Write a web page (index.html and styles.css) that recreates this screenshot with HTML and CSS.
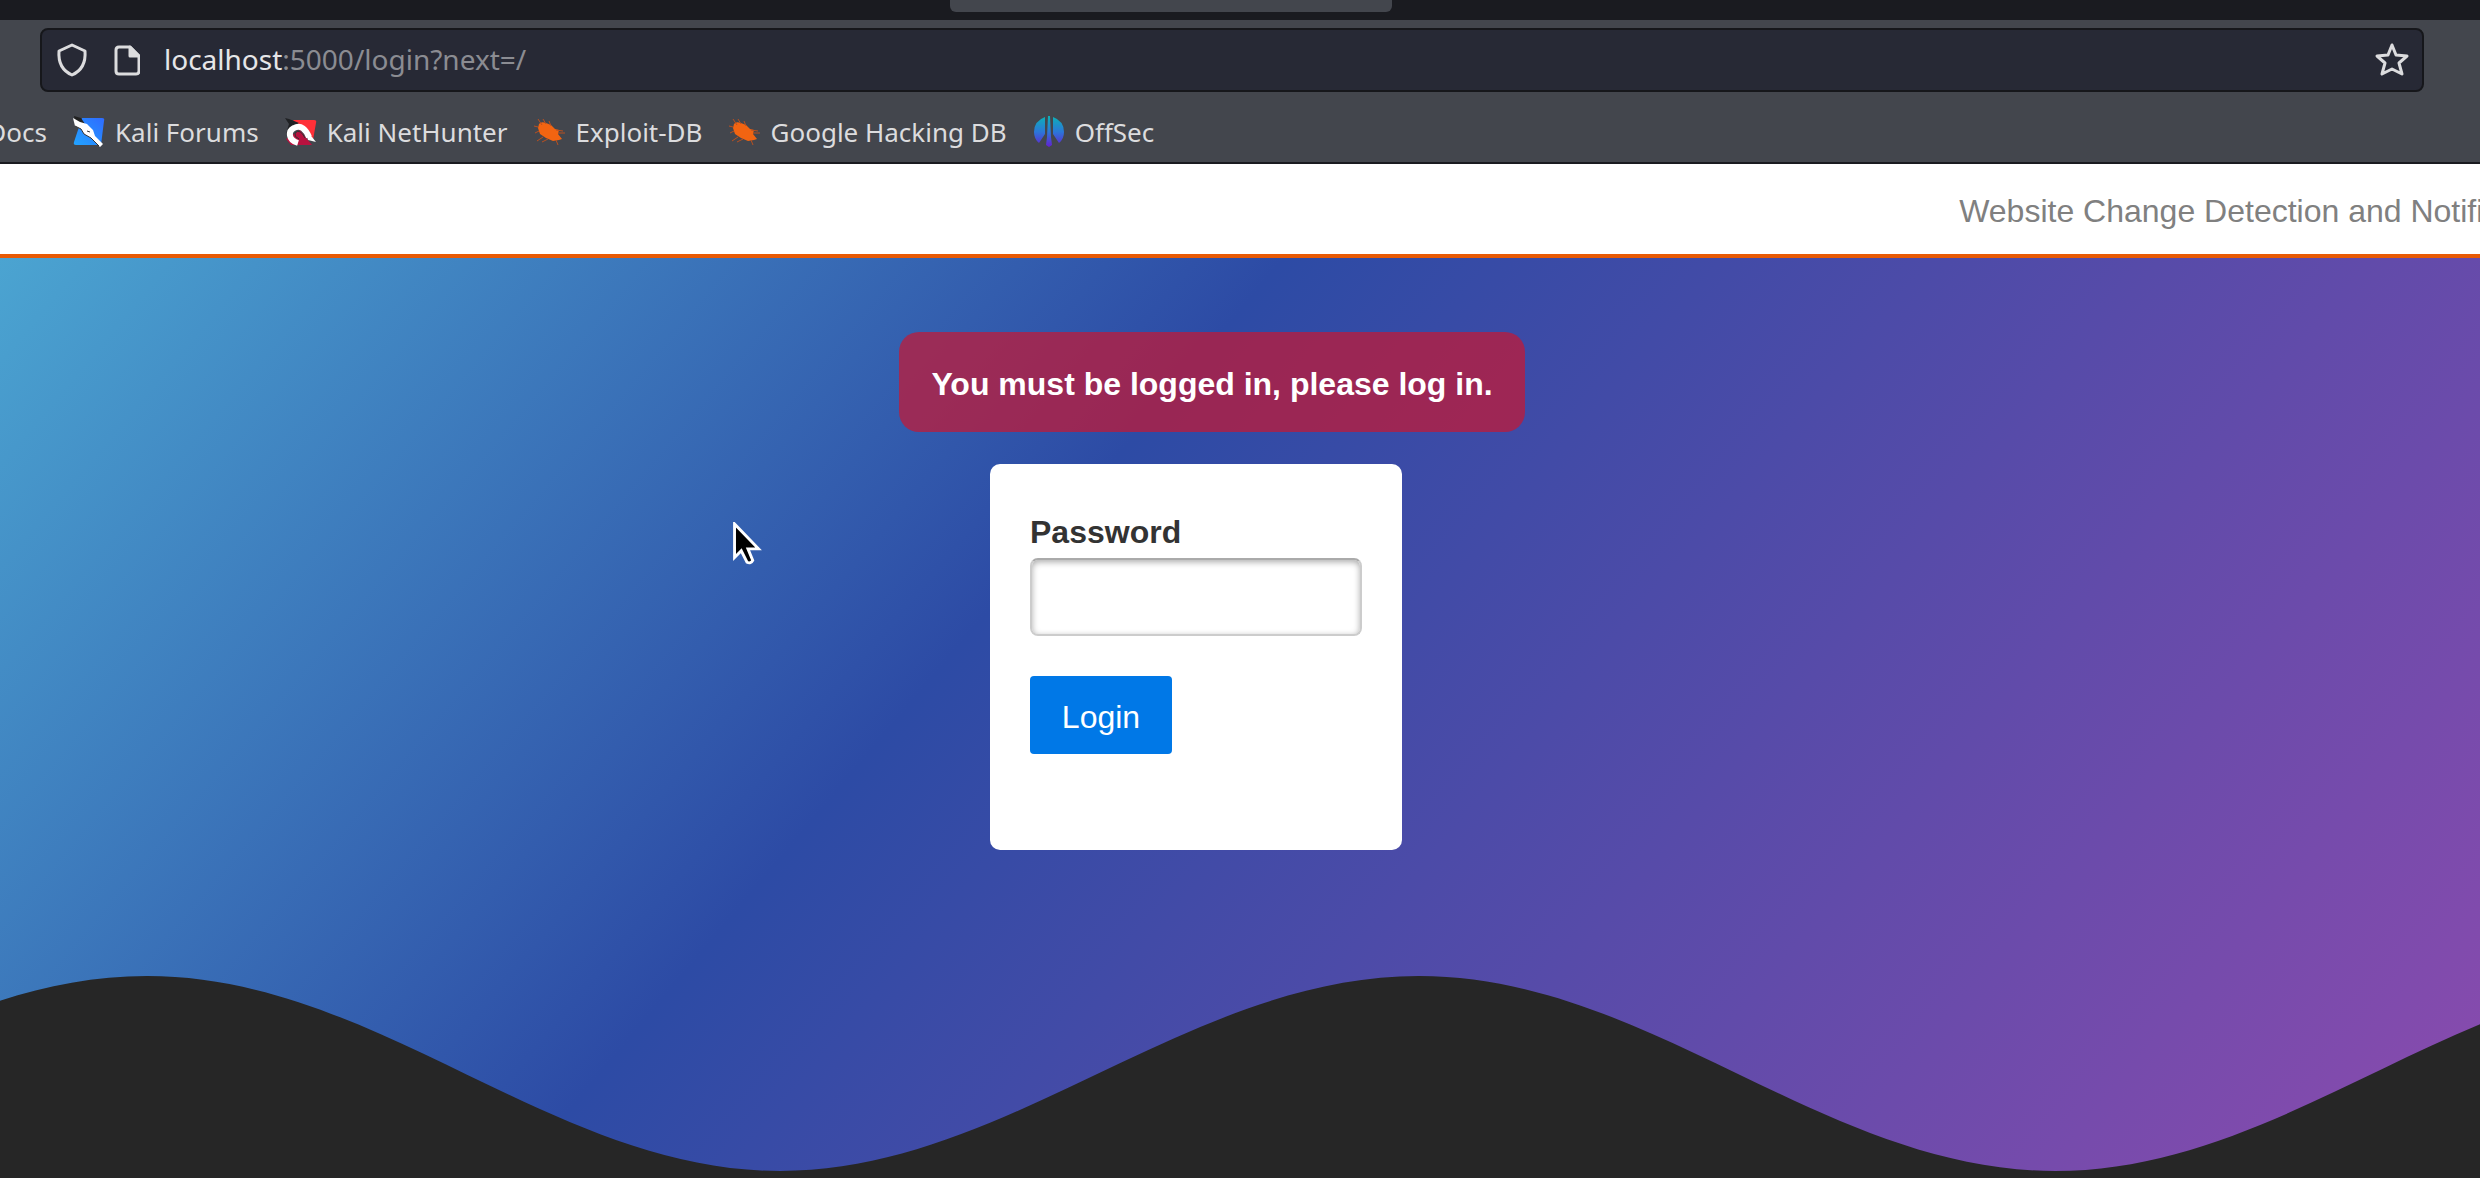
FILE: index.html
```html
<!DOCTYPE html>
<html lang="en">
<head>
<meta charset="utf-8">
<title>Login</title>
<link rel="stylesheet" href="styles.css">
</head>
<body>
<div class="chrome">
  <div class="tabs"><div class="tab"></div></div>
  <div class="toolbar">
    <div class="address">
      <svg class="icon" viewBox="0 0 32 40" aria-hidden="true"><path d="M16 5 29 11C30 24 25 31 16 35 7 31 2 24 3 11Z"/></svg>
      <svg class="icon page" viewBox="0 0 28 40" aria-hidden="true"><path d="M7 7H18L27 16V31Q27 34 24 34H7Q4 34 4 31V10Q4 7 7 7Z"/><path class="solid" d="M18 7 27 16H18Z"/></svg>
      <div class="url"><span class="host">localhost</span>:5000/login?next=/</div>
      <button class="star" type="button" aria-label="Bookmark this page"><svg class="icon" viewBox="0 0 36 40" aria-hidden="true"><path d="M18 5 22 15 33 16 25 23 28 34 18 29 8 34 11 23 3 16 14 15Z"/></svg></button>
    </div>
  </div>
  <nav class="bookmarks" aria-label="Bookmarks">
    <a class="bookmark docs" href="#">Kali Docs</a>
    <a class="bookmark" href="#"><svg class="favicon" viewBox="0 0 32 32" aria-hidden="true"><defs><linearGradient id="blue" x1="1" y1="0" x2="0" y2="1"><stop stop-color="#2f6bff"/><stop offset="1" stop-color="#22a4ff"/></linearGradient></defs><path fill="url(#blue)" d="M9 2H29Q32 2 31 5L28 29H3Q0 29 1 26Z"/><path fill="#222" d="M1 0 8 2 12 8 2 5Z"/><path fill="#fff" d="M0 2 7 6 14 8 20 14 22 20 30 28 27 31 18 22 11 18 8 13 2 10Z"/><path stroke="#333" fill="none" d="M2 10 8 13 11 18 18 22 26 30M14 15 17 16"/></svg>Kali Forums</a>
    <a class="bookmark" href="#"><svg class="favicon" viewBox="0 0 32 32" aria-hidden="true"><path fill="#ff3038" d="M8 4H29Q32 4 31 7L28 24 20 18Z"/><path fill="#b8123f" d="M1 23 6 29H27L15 14Z"/><path fill="#202124" d="M0 2 4 3 14 7 6 14 1 18 4 8Z"/><path fill="none" stroke="#fff" stroke-width="6" d="M13 27C3 24 3 15 9 12 16 8 21 14 24 21"/><path fill="#fff" d="M19 11 31 26 23 24Z"/><path fill="none" stroke="#333" stroke-width="1" d="M14 23Q9 21 10 17 15 12 20 22"/></svg>Kali NetHunter</a>
    <a class="bookmark" href="#"><svg class="favicon" viewBox="0 0 32 32" aria-hidden="true"><use href="#bug"/></svg>Exploit-DB</a>
    <a class="bookmark" href="#"><svg class="favicon" viewBox="0 0 32 32" aria-hidden="true"><g id="bug"><path fill="#f26411" d="M5 8Q7 5 12 7L17 9 21 13 25 14 24 18 28 23 25 24 19 25 12 22 6 18 4 12Z"/><path fill="none" stroke="#b95020" d="M8 9 4 3 M12 8 9 3M17 10 15 5M22 14 29 15M24 17 31 17M4 11 0 10M5 15 1 17M9 21 3 25M14 23 8 26M22 24 24 29"/></g></svg>Google Hacking DB</a>
    <a class="bookmark" href="#"><svg class="favicon" viewBox="0 0 32 32" aria-hidden="true"><defs><linearGradient id="shell" gradientUnits="userSpaceOnUse" x1="0" y1="1" x2="0" y2="31"><stop stop-color="#0eaeb8"/><stop offset=".5" stop-color="#2c76d8"/><stop offset="1" stop-color="#6320d0"/></linearGradient></defs><path fill="url(#shell)" d="M12 1Q1 5 1 16 1 23 6 27L12 18ZM20 1Q31 5 31 16 31 23 26 27L20 18ZM15 0H17L18 21 19 29 16 31 13 29 14 21Z"/></svg>OffSec</a>
  </nav>
</div>
<header class="site-header"><p class="tagline">Website Change Detection and Notification</p></header>
<main class="hero">
  <div class="content">
    <p class="message" role="alert">You must be logged in, please log in.</p>
    <form class="card">
      <label class="label" for="password">Password</label>
      <input class="input" id="password" type="password">
      <button class="login" type="submit">Login</button>
    </form>
  </div>
  <svg class="wave" viewBox="0 0 2480 204" preserveAspectRatio="none" aria-hidden="true"><path fill="#262626" d="M-489 197C-258 197-84 2 147 2S552 197 780 197 1188 2 1419 2 1824 197 2055 197 2460 2 2691 2V204H-489Z"/></svg>
</main>
<svg class="cursor" viewBox="0 0 30 48" aria-hidden="true"><path d="M2 2V37L9 30 15 42Q19 44 21 40L16 28H27Z"/></svg>
</body>
</html>
```
FILE: styles.css
```css
* { box-sizing: border-box; }

body {
  margin: 0;
  min-height: 100vh;
  display: flex;
  flex-direction: column;
  position: relative;
  overflow-x: hidden;
  background: #262626;
  font-family: "Liberation Sans", Arial, sans-serif;
  font-size: 32px;
}

p { margin: 0; }

.chrome {
  background: #43464d;
  border-bottom: 2px solid #1a1b20;
  color: #dcdcde;
  font-family: "Noto Sans", sans-serif;
}

.tabs {
  display: flex;
  justify-content: center;
  height: 20px;
  padding-right: 138px;
  background: #1a1b20;
}

.tab {
  width: 442px;
  height: 12px;
  border-radius: 0 0 6px 6px;
  background: #43464d;
}

.toolbar { padding: 8px 56px 0 40px; }

.address {
  display: flex;
  align-items: center;
  gap: 24px;
  height: 64px;
  padding: 0 12px 0 14px;
  border: 2px solid #16171b;
  border-radius: 8px;
  background: #272935;
}

.icon {
  display: block;
  width: 32px;
  height: 40px;
  fill: none;
  stroke: #dcdcde;
  stroke-width: 3px;
  stroke-linejoin: round;
}

.icon.page { width: 28px; }

.icon .solid { fill: #dcdcde; }

.url {
  flex: 1;
  color: #8b8c92;
  font-size: 28px;
  line-height: 36px;
  padding-bottom: 2px;
}

.host { color: #e6e6e8; }

.star {
  padding: 0;
  border: 0;
  background: none;
}

.star .icon { width: 36px; }

.bookmarks {
  display: flex;
  align-items: center;
  gap: 26px;
  height: 70px;
  padding: 20px 0 10px;
  overflow: hidden;
}

.bookmark {
  display: flex;
  align-items: center;
  gap: 10px;
  color: inherit;
  font-size: 26px;
  white-space: nowrap;
  text-decoration: none;
}

.docs {
  justify-content: flex-end;
  width: 47px;
}

.favicon {
  width: 32px;
  height: 32px;
}

.site-header {
  display: flex;
  align-items: center;
  height: 94px;
  padding-top: 4px;
  padding-left: 79%;
  border-bottom: 4px solid #e85a05;
  background: #fff;
  color: #808080;
  overflow: hidden;
}

.tagline { white-space: nowrap; }

.hero {
  flex: 1;
  display: flex;
  flex-direction: column;
  justify-content: space-between;
  background: linear-gradient(130deg, #4ba4d1, #2d4ba5 39.5%, #8b4bae);
}

.content {
  display: flex;
  flex-direction: column;
  align-items: center;
  gap: 32px;
  padding: 74px 88px 0 0;
}

.message {
  margin-left: 32px;
  padding: 34px 32px 30px;
  border-radius: 20px;
  background: rgba(200, 23, 50, 0.7);
  color: #fff;
  font-weight: bold;
  line-height: 36px;
}

.card {
  display: flex;
  flex-direction: column;
  align-items: flex-start;
  width: 412px;
  margin-bottom: 40px;
  padding: 50px 40px 96px;
  border-radius: 10px;
  background: #fff;
}

.label {
  color: #333;
  font-weight: bold;
  line-height: 36px;
}

.input {
  width: 100%;
  height: 78px;
  margin: 8px 0 40px;
  padding: 16px;
  border: 2px solid #ccc;
  border-top-color: #aaa;
  border-radius: 8px;
  box-shadow: inset 0 2px 6px #aaa;
  font: inherit;
}

.login {
  width: 142px;
  height: 78px;
  padding: 4px 0 0;
  border: 0;
  border-radius: 4px;
  background: #0078e7;
  color: #fff;
  font: inherit;
}

.wave {
  display: block;
  width: 100%;
  height: 204px;
}

.cursor {
  position: absolute;
  top: 522px;
  left: 732px;
  width: 30px;
  height: 46px;
  fill: #000;
  stroke: #fff;
  stroke-width: 3px;
}
```
